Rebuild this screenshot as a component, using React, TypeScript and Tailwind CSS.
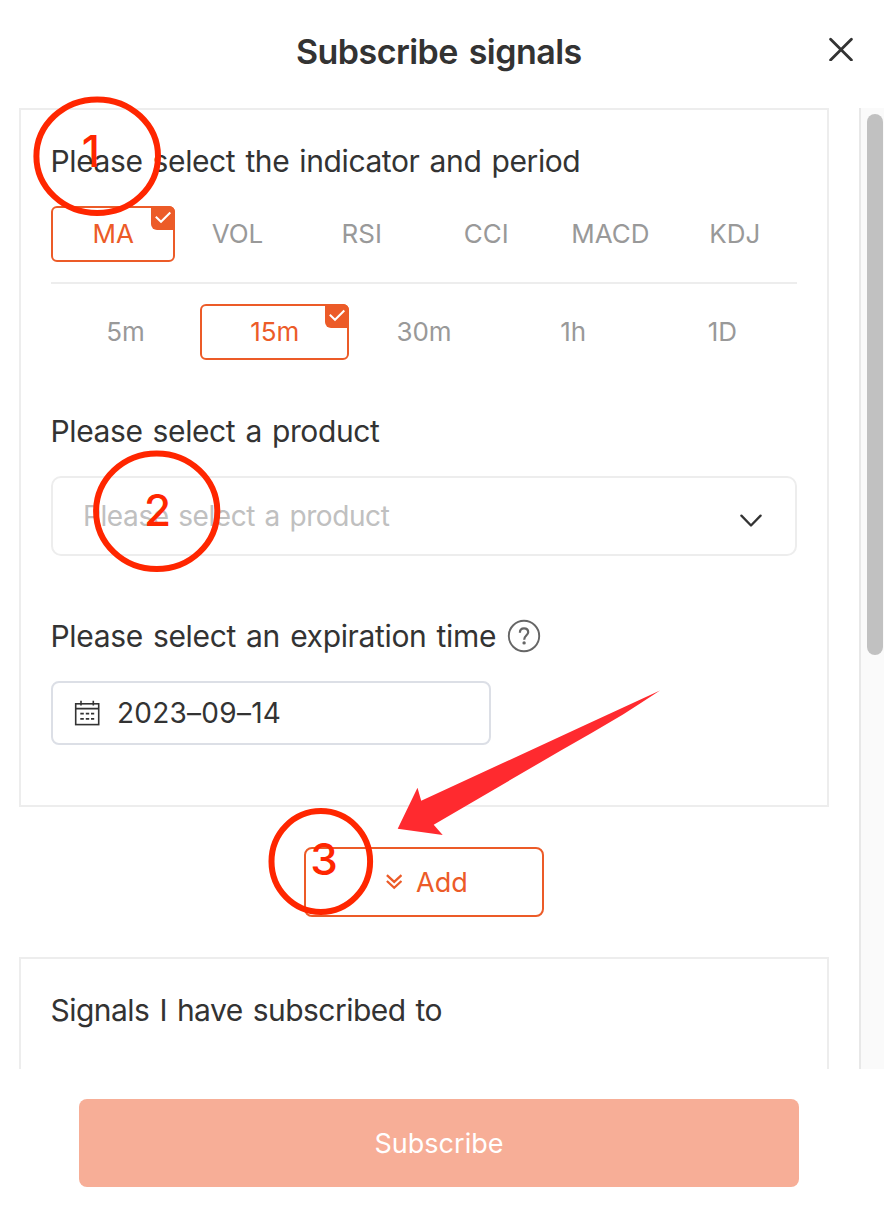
import type { ReactNode } from "react";

const indicators = ["MA", "VOL", "RSI", "CCI", "MACD", "KDJ"];
const periods = ["5m", "15m", "30m", "1h", "1D"];

function Option({ label, selected }: { label: string; selected: boolean }) {
  if (!selected) {
    return (
      <div className="flex h-14 flex-1 basis-0 items-center justify-center border-2 border-transparent pb-0.5 text-[26px] text-[#999999]">
        {label}
      </div>
    );
  }
  return (
    <div className="relative flex h-14 flex-1 basis-0 items-center justify-center rounded-md border-2 border-[#ec5b28] pb-0.5 text-[26px] text-[#ec5b28]">
      {label}
      <span className="absolute -top-0.5 -right-0.5 size-6 rounded-tr-md rounded-bl-md bg-[#ec5b28]">
        <svg viewBox="0 0 24 24" className="size-6" fill="none" stroke="#fff" strokeWidth="2">
          <path d="M4.8 10.7L10 15.8L19.3 6.5" />
        </svg>
      </span>
    </div>
  );
}

function Label({ children, className = "tracking-[-0.4px]" }: { children: ReactNode; className?: string }) {
  return (
    <div
      className={`-ml-[0.5px] flex h-[42px] items-center text-[30px] leading-[42px] whitespace-pre text-[#333333] [word-spacing:2.1px] ${className}`}
    >
      {children}
    </div>
  );
}

function CalendarIcon() {
  return (
    <svg width="26" height="26" viewBox="0 0 26 26" fill="none" stroke="#333" strokeWidth="1.6">
      <rect x="1.7" y="3.8" width="23" height="20.8" />
      <path d="M1.7 8.6H24.7M7 0.8V5.6M19.3 0.8V5.6" />
      <path d="M6.3 13.6H9.8M11.8 13.6H15.2M17 13.6H20.2M6.3 18.9H9.8M11.8 18.9H15.2M17 18.9H20.2" />
    </svg>
  );
}

function HelpIcon() {
  return (
    <svg width="34" height="34" viewBox="0 0 34 34" fill="none" stroke="#666">
      <circle cx="17" cy="17" r="15.2" strokeWidth="1.9" />
      <path d="M12.9 13.7C12.9 10.9 14.5 9.3 17 9.3C19.6 9.3 21.2 11 21.2 13.3C21.2 16.2 17.2 16.6 17.2 20.7" strokeWidth="2.2" />
      <circle cx="17.1" cy="23.9" r="1.7" fill="#666" stroke="none" />
    </svg>
  );
}

function Annotations() {
  return (
    <svg
      className="pointer-events-none absolute top-0 left-0"
      width="884"
      height="1222"
      viewBox="0 0 884 1222"
      fill="none"
    >
      <path
        d="M397.7 828.7L417.5 787.7L421.2 800.7L583 726L660 690.5Q641 703 623 714.5Q592 733 560 751L433.7 824.7L442.7 835Z"
        fill="#ff2a2f"
      />
      <g stroke="#ff2600" strokeWidth="6">
        <ellipse cx="97.2" cy="156.2" rx="60.8" ry="56.8" />
        <ellipse cx="156.7" cy="511.2" rx="60.6" ry="57.8" />
        <ellipse cx="320.8" cy="861.5" rx="49.3" ry="50.4" />
      </g>
      <g fill="#ff2600" fontSize="44" fontWeight="500" textAnchor="middle">
        <text x="91" y="167">1</text>
        <text x="157.5" y="526">2</text>
        <text x="324" y="875">3</text>
      </g>
    </svg>
  );
}

export default function App() {
  return (
    <div className="relative flex h-[1222px] w-[884px] flex-col overflow-hidden bg-white font-['Inter',sans-serif]">
      <header className="flex h-[108px] shrink-0 pt-[27px]">
        <h1 className="ml-[296px] w-[533px] text-[34px] leading-[50px] font-semibold tracking-[-0.55px] whitespace-nowrap text-[#333333] [word-spacing:3px]">
          Subscribe signals
        </h1>
        <button className="mt-[10px] h-6" aria-label="Close">
          <svg width="24" height="24" viewBox="0 0 24 24" fill="none" stroke="#333" strokeWidth="2.8" strokeLinecap="round">
            <path d="M1.6 2.2L22.4 23M22.4 2.2L1.6 23" />
          </svg>
        </button>
      </header>

      <div className="flex h-[961px] shrink-0 overflow-hidden">
        <main className="w-[859px] pl-[19px]">
          <section className="h-[699px] w-[810px] border-2 border-[#ededed] px-[30px] pt-[30px]">
            <Label>Please select the indicator and period</Label>
            <div className="mt-6 flex">
              {indicators.map((name) => (
                <Option key={name} label={name} selected={name === "MA"} />
              ))}
            </div>
            <div className="mt-5 h-0.5 bg-[#ededed]" />
            <div className="mt-5 flex">
              {periods.map((name) => (
                <Option key={name} label={name} selected={name === "15m"} />
              ))}
            </div>

            <Label className="mt-[50px] tracking-[-0.4px]">Please select a product</Label>
            <div className="mt-6 flex h-20 items-center justify-between rounded-[10px] border-2 border-[#ededed] pr-[33px] pl-[30px]">
              <span className="text-[28px] tracking-[-0.4px] text-[#c0c0c0] [word-spacing:2px]">
                Please select a product
              </span>
              <svg className="mt-2.5" width="22" height="14" viewBox="0 0 22 14" fill="none" stroke="#333" strokeWidth="2.3" strokeLinecap="round" strokeLinejoin="round">
                <path d="M1.4 1.6L11 11.5L20.6 1.6" />
              </svg>
            </div>

            <Label className="mt-[59px] tracking-[-0.35px]">
              Please select an expiration time
              <span className="ml-[11px]">
                <HelpIcon />
              </span>
            </Label>
            <div className="mt-6 flex h-16 w-[440px] items-center rounded-lg border-2 border-[#dcdfe6] pl-[21px]">
              <CalendarIcon />
              <span className="ml-[17px] text-[28px] tracking-[0.25px] text-[#333333]">2023–09–14</span>
            </div>
          </section>

          <button className="mt-10 ml-[285px] flex h-[70px] w-60 items-center rounded-lg border-2 border-[#ec5b28] pl-20 text-[27px] text-[#ec5b28]">
            <svg width="16" height="16" viewBox="0 0 16 16" fill="none" stroke="#ec5b28" strokeWidth="2.3">
              <path d="M0.9 1.1L8.2 7.9L15.5 1.1M0.9 7L8.2 13.8L15.5 7" />
            </svg>
            <span className="ml-3.5 pt-0.5">Add</span>
          </button>

          <section className="mt-10 h-60 w-[810px] border-2 border-[#ededed] px-[30px] pt-[30px]">
            <Label className="tracking-[-0.53px]">Signals I have subscribed to</Label>
          </section>
        </main>
        <div className="flex-1 border-l-2 border-[#e8e8e8] bg-[#fafafa] pt-1.5 pl-1.5">
          <div className="h-[541px] w-4 rounded-full bg-[#c1c1c1]" />
        </div>
      </div>

      <footer className="pt-[30px] pl-[79px]">
        <button className="h-[88px] w-[720px] rounded-lg bg-[#f7ae97] pt-0.5 text-[27px] text-white">Subscribe</button>
      </footer>

      <Annotations />
    </div>
  );
}
